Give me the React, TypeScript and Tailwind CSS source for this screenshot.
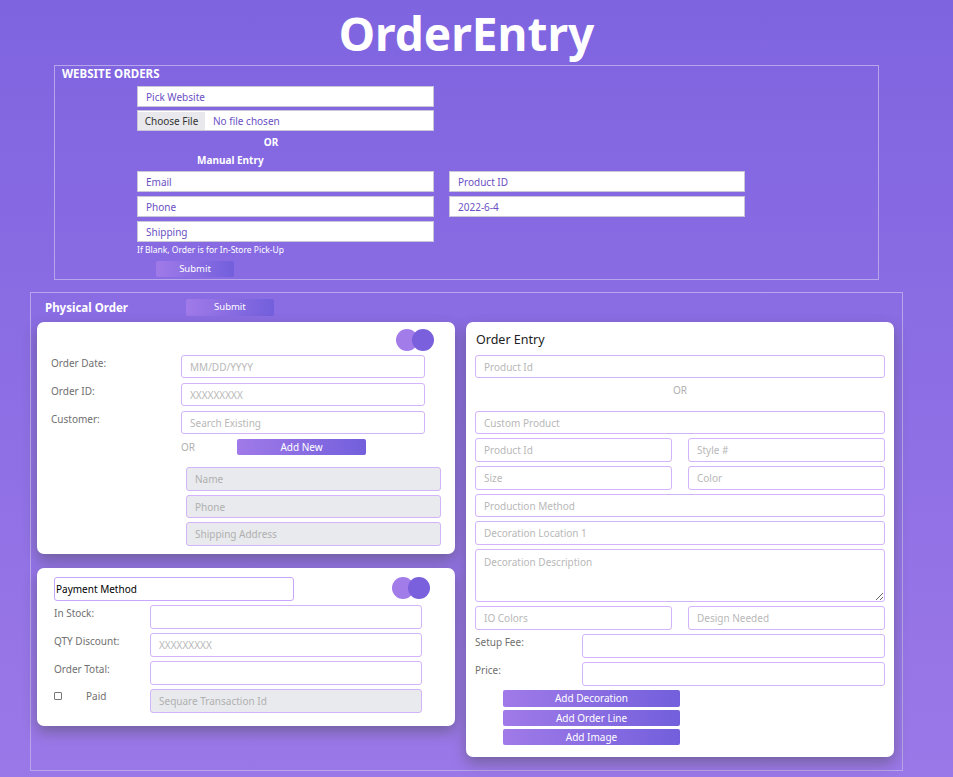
import React from 'react';

const field =
  'block w-full border border-[#d2b4fb] rounded-[3px] bg-white px-[8px] text-[10px] text-[#555] placeholder:text-[#b8b8b8] outline-none';
const grayField =
  'block w-full border border-[#d2b4fb] rounded-[3px] bg-[#e8eaed] px-[8px] text-[10px] text-[#555] placeholder:text-[#b0b0b0] outline-none';
const webField =
  'flex items-center h-[21px] border border-[#c9c6d8] bg-white px-[8px] pt-[2px] text-[10px] text-[#6a4fc4]';
const gradBtn =
  'flex items-center justify-center rounded-[2px] bg-gradient-to-r from-[#a07ae8] to-[#735fdc] text-white';

function Toggle() {
  return (
    <div className="flex">
      <span className="h-[22px] w-[22px] rounded-full bg-[#a27ce9]" />
      <span className="-ml-[6px] h-[22px] w-[22px] rounded-full bg-[#7a60dd]" />
    </div>
  );
}

function Label({ children }: { children: React.ReactNode }) {
  return <span className="pt-[1px] text-[10px] leading-[14px] text-[#707070]">{children}</span>;
}

export default function App() {
  return (
    <div className="min-h-[777px] bg-gradient-to-b from-[#7f64e0] to-[#9b78e8] font-['Noto_Sans',sans-serif]">
      <h1 className="h-[65px] pr-[20px] text-center text-[46px] font-bold leading-[66px] text-white">OrderEntry</h1>

      {/* website orders */}
      <section className="ml-[54px] h-[215px] w-[825px] border border-[#b7a6ec]">
        <h2 className="pl-[7px] pt-[1px] text-[11.5px] font-bold leading-[14px] text-white">WEBSITE ORDERS</h2>
        <div className="pl-[82px] pt-[5px]">
          <div className={`${webField} w-[297px]`}>Pick Website</div>
          <div className="mt-[3px] flex h-[21px] w-[297px] items-center border border-[#c9c6d8] bg-white pt-[1px] text-[10px]">
            <span className="flex h-full w-[67px] items-center justify-center bg-[#e9e9ed] text-[#333]">Choose File</span>
            <span className="pl-[8px] text-[#6a4fc4]">No file chosen</span>
          </div>
          <div className="w-[268px] pt-[4px] text-center text-[10px] font-bold leading-[14px] text-white">OR</div>
          <div className="pl-[60px] pt-[4px] text-[10px] font-bold leading-[14px] text-white">Manual Entry</div>
          <div className="mt-[4px] flex gap-[15px]">
            <div className="flex w-[297px] flex-col gap-[4px]">
              <div className={webField}>Email</div>
              <div className={webField}>Phone</div>
              <div className={webField}>Shipping</div>
            </div>
            <div className="flex w-[296px] flex-col gap-[4px]">
              <div className={webField}>Product ID</div>
              <div className={webField}>2022-6-4</div>
            </div>
          </div>
          <div className="pt-[1px] text-[8.5px] leading-[14px] text-white">If Blank, Order is for In-Store Pick-Up</div>
          <button className={`${gradBtn} ml-[19px] mt-[4px] h-[16px] w-[78px] text-[9.5px]`}>Submit</button>
        </div>
      </section>

      {/* physical order */}
      <section className="ml-[30px] mt-[12px] h-[479px] w-[873px] border border-[#b7a6ec] px-[6px]">
        <div className="flex h-[29px] items-center">
          <h2 className="pl-[8px] text-[11.5px] font-bold text-white">Physical Order</h2>
          <button className={`${gradBtn} ml-[58px] h-[17px] w-[88px] text-[9.5px]`}>Submit</button>
        </div>
        <div className="flex gap-[11px]">
          <div className="flex w-[418px] flex-col gap-[14px]">
            {/* customer card */}
            <div className="h-[232px] rounded-[7px] bg-white pl-[14px] shadow-[0_6px_14px_rgba(70,70,70,0.45)]">
              <div className="flex justify-end pr-[21px] pt-[7px]">
                <Toggle />
              </div>
              <div className="mt-[4px] grid grid-cols-[130px_244px] gap-y-[5px]">
                <Label>Order Date:</Label>
                <input className={`${field} h-[23px]`} placeholder="MM/DD/YYYY" />
                <Label>Order ID:</Label>
                <input className={`${field} h-[23px]`} placeholder="XXXXXXXXX" />
                <Label>Customer:</Label>
                <input className={`${field} h-[23px]`} placeholder="Search Existing" />
              </div>
              <div className="mt-[5px] flex items-center pl-[130px]">
                <span className="text-[10px] text-[#b0b0b0]">OR</span>
                <button className={`${gradBtn} ml-[42px] h-[16px] w-[129px] text-[10px]`}>Add New</button>
              </div>
              <div className="ml-[135px] mt-[12px] flex w-[255px] flex-col gap-[4px]">
                <input className={`${grayField} h-[24px]`} placeholder="Name" />
                <input className={`${grayField} h-[23px]`} placeholder="Phone" />
                <input className={`${grayField} h-[24px]`} placeholder="Shipping Address" />
              </div>
            </div>

            {/* payment card */}
            <div className="h-[158px] rounded-[7px] bg-white pl-[17px] shadow-[0_6px_14px_rgba(70,70,70,0.45)]">
              <div className="flex items-start justify-between pr-[25px] pt-[9px]">
                <div className="flex h-[24px] w-[240px] items-center rounded-[3px] border border-[#c8a6fb] pl-[1px] text-[10px] text-black">
                  Payment Method
                </div>
                <Toggle />
              </div>
              <div className="mt-[4px] grid grid-cols-[96px_272px] gap-y-[4px]">
                <Label>In Stock:</Label>
                <input className={`${field} h-[24px]`} />
                <Label>QTY Discount:</Label>
                <input className={`${field} h-[24px]`} placeholder="XXXXXXXXX" />
                <Label>Order Total:</Label>
                <input className={`${field} h-[24px]`} />
                <div className="flex items-start pt-[3px]">
                  <span className="h-[8px] w-[8px] rounded-[1px] border border-[#777]" />
                  <span className="ml-[24px] -mt-[3px] text-[10px] text-[#707070]">Paid</span>
                </div>
                <input className={`${grayField} h-[24px]`} placeholder="Sequare Transaction Id" />
              </div>
            </div>
          </div>

          {/* order entry card */}
          <div className="h-[435px] w-[428px] rounded-[7px] bg-white px-[9px] shadow-[0_6px_14px_rgba(70,70,70,0.45)]">
            <h3 className="pl-[1px] pt-[9px] text-[12.5px] leading-[17px] text-[#222]">Order Entry</h3>
            <input className={`${field} mt-[7px] h-[23px]`} placeholder="Product Id" />
            <div className="pt-[4px] text-center text-[10px] leading-[16px] text-[#b0b0b0]">OR</div>
            <div className="mt-[13px] flex flex-col gap-[4px]">
              <input className={`${field} h-[23px]`} placeholder="Custom Product" />
              <div className="flex gap-[16px]">
                <input className={`${field} h-[24px]`} placeholder="Product Id" />
                <input className={`${field} h-[24px]`} placeholder="Style #" />
              </div>
              <div className="flex gap-[16px]">
                <input className={`${field} h-[24px]`} placeholder="Size" />
                <input className={`${field} h-[24px]`} placeholder="Color" />
              </div>
              <input className={`${field} h-[23px]`} placeholder="Production Method" />
              <input className={`${field} h-[24px]`} placeholder="Decoration Location 1" />
              <textarea className={`${field} h-[53px] pt-[5px]`} placeholder="Decoration Description" />
              <div className="flex gap-[16px]">
                <input className={`${field} h-[24px]`} placeholder="IO Colors" />
                <input className={`${field} h-[24px]`} placeholder="Design Needed" />
              </div>
            </div>
            <div className="mt-[4px] grid grid-cols-[107px_303px] gap-y-[4px]">
              <Label>Setup Fee:</Label>
              <input className={`${field} h-[24px]`} />
              <Label>Price:</Label>
              <input className={`${field} h-[24px]`} />
            </div>
            <div className="ml-[28px] mt-[4px] flex w-[177px] flex-col gap-[3px]">
              <button className={`${gradBtn} h-[17px] text-[10px]`}>Add Decoration</button>
              <button className={`${gradBtn} h-[16px] text-[10px]`}>Add Order Line</button>
              <button className={`${gradBtn} h-[16px] text-[10px]`}>Add Image</button>
            </div>
          </div>
        </div>
      </section>
    </div>
  );
}
